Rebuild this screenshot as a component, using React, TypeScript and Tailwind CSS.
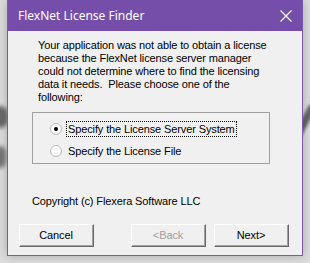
import React from "react";

const sans = { fontFamily: '"Liberation Sans", Arial, sans-serif', letterSpacing: "-0.12px" };

function Radio({ checked }: { checked: boolean }) {
  return (
    <svg width="12" height="12" viewBox="0 0 12 12" className="shrink-0">
      <circle cx="6" cy="6" r="5" fill="#ffffff" />
      <circle cx="6" cy="6" r="5.5" fill="none" stroke="#b8b8b8" strokeWidth="1" />
      {checked && <circle cx="6" cy="6" r="2" fill="#000000" />}
    </svg>
  );
}

function Btn({ label, disabled }: { label: string; disabled?: boolean }) {
  return (
    <div className="w-[75px] h-[23px] border-t border-l border-t-white border-l-white border-r border-b border-r-[#696969] border-b-[#696969] bg-[#f0f0f0]">
      <div className="w-full h-full border-r border-b border-r-[#a0a0a0] border-b-[#a0a0a0] flex items-center justify-center">
        <span className={disabled ? "text-[11px] text-[#a0a0a0]" : "text-[11px] text-black"} style={sans}>
          {label}
        </span>
      </div>
    </div>
  );
}

export default function App() {
  return (
    <div className="relative w-[310px] h-[263px] overflow-hidden bg-[#dedede]">
      <div className="absolute left-[-8px] top-[106px] w-[16px] h-[22px] rounded-full bg-[#6a6a6a] blur-[2px]" />
      <div className="absolute left-[-6px] top-[146px] w-[12px] h-[22px] rounded-full bg-[#777777] blur-[2px]" />
      <div className="absolute left-[301px] top-[104px] w-[8px] h-[34px] bg-[#666666] blur-[1.5px] rotate-[28deg]" />

      <div className="relative ml-[7px] w-[296px] h-[256px] flex flex-col shadow-[0_0_10px_rgba(0,0,0,0.25)]">
        <div className="h-[31px] bg-[#744ea8] flex items-center justify-between pl-[10px] pr-[10px] border-l border-r border-[#7b58b4]">
          <span className="text-[12px] text-white" style={{ fontFamily: '"Noto Sans", "Open Sans", sans-serif' }}>
            FlexNet License Finder
          </span>
          <svg width="12" height="12" viewBox="0 0 12 12">
            <path d="M0.5 0.5 L11.5 11.5 M11.5 0.5 L0.5 11.5" stroke="#ffffff" strokeWidth="1.2" />
          </svg>
        </div>
        <div className="flex-1 bg-[#f0f0f0] border-l border-r border-b border-[#7b58b4] flex flex-col text-[11px] text-black" style={sans}>
          <div className="pl-[30px] pt-[8px] leading-[13px]">
            <div>Your application was not able to obtain a license</div>
            <div>because the FlexNet license server manager</div>
            <div>could not determine where to find the licensing</div>
            <div>data it needs.&nbsp; Please choose one of the</div>
            <div>following:</div>
          </div>
          <div className="ml-[24px] mt-[8px] w-[238px] h-[52px] border border-[#a0a0a0] flex flex-col pl-[17px] pt-[9px] gap-[8px]">
            <div className="flex items-center gap-[4px] h-[14px]">
              <Radio checked />
              <span className="border border-dotted border-black px-[1px] leading-[14px]">Specify the License Server System</span>
            </div>
            <div className="flex items-center gap-[4px] h-[14px]">
              <Radio checked={false} />
              <span className="pl-[2px] leading-[14px]">Specify the License File</span>
            </div>
          </div>
          <div className="ml-[24px] mt-[31px] leading-[13px]">Copyright (c) Flexera Software LLC</div>
          <div className="flex mt-[16px] pl-[11px]">
            <Btn label="Cancel" />
            <div className="ml-[37px]">
              <Btn label="<Back" disabled />
            </div>
            <div className="ml-[8px]">
              <Btn label="Next>" />
            </div>
          </div>
        </div>
      </div>
    </div>
  );
}
